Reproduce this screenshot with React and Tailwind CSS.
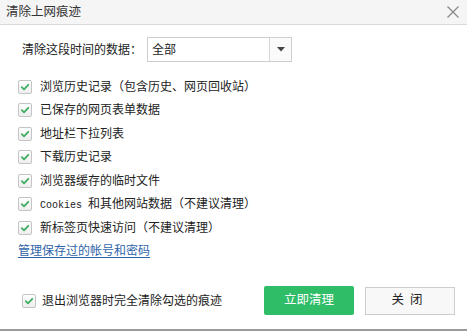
import React from "react";

const font = { fontFamily: '"Liberation Sans", "Noto Sans CJK SC", sans-serif' };

function Check() {
  return (
    <span className="flex h-[14px] w-[14px] shrink-0 items-center justify-center rounded-[2px] border border-[#c4c4c4] bg-gradient-to-b from-[#ffffff] to-[#eeeeee]">
      <svg width="10" height="10" viewBox="0 0 10 10">
        <path d="M1.8 5.2 L4 7.3 L8.3 2.8" fill="none" stroke="#3fae62" strokeWidth="1.8" strokeLinecap="round" strokeLinejoin="round" />
      </svg>
    </span>
  );
}

function Row({ children }) {
  return (
    <div className="flex h-[23.5px] items-center gap-[8px]">
      <Check />
      <span className="text-[12px] leading-none text-[#222]">{children}</span>
    </div>
  );
}

export default function App() {
  return (
    <div className="relative h-[331px] w-[467px] overflow-hidden bg-white" style={font}>
      <div className="flex h-[25px] items-center justify-between border-b border-[#d9d9d9] bg-[#f5f5f5] pl-[6px] pr-[6px]">
        <span className="text-[12.5px] text-[#333]">清除上网痕迹</span>
        <svg width="14" height="14" viewBox="0 0 14 14" className="mr-[1px]">
          <path d="M1.5 1.5 L12.5 12.5 M12.5 1.5 L1.5 12.5" stroke="#8a8a8a" strokeWidth="1.3" />
        </svg>
      </div>

      <div className="mt-[12px] flex items-center pl-[22px]">
        <span className="w-[125px] text-[12px] text-[#222]">清除这段时间的数据：</span>
        <div className="flex h-[25px] w-[145px] items-stretch border border-[#cfcfcf] bg-white">
          <span className="flex flex-1 items-center pl-[4px] text-[12px] text-[#222]">全部</span>
          <span className="flex w-[22px] items-center justify-center border-l border-[#d6d6d6] bg-[#fafafa]">
            <svg width="8" height="5" viewBox="0 0 8 5">
              <path d="M0 0 L8 0 L4 4.5 Z" fill="#444" />
            </svg>
          </span>
        </div>
      </div>

      <div className="mt-[13px] flex flex-col pl-[18px]">
        <Row>浏览历史记录（包含历史、网页回收站）</Row>
        <Row>已保存的网页表单数据</Row>
        <Row>地址栏下拉列表</Row>
        <Row>下载历史记录</Row>
        <Row>浏览器缓存的临时文件</Row>
        <Row>
          <span style={{ fontFamily: '"Liberation Mono", monospace' }} className="text-[10px]">Cookies </span>
          和其他网站数据（不建议清理）
        </Row>
        <Row>新标签页快速访问（不建议清理）</Row>
        <div className="flex h-[23.5px] items-center">
          <span className="text-[12px] leading-none text-[#2f64a8] underline underline-offset-2">管理保存过的帐号和密码</span>
        </div>
      </div>

      <div className="mt-[23px] flex items-center pl-[22px]">
        <div className="flex w-[242px] items-center gap-[6px]">
          <Check />
          <span className="text-[12px] text-[#222]">退出浏览器时完全清除勾选的痕迹</span>
        </div>
        <div className="flex h-[29px] w-[90px] items-center justify-center rounded-[2px] bg-[#2fbd68] text-[12.5px] text-white">
          立即清理
        </div>
        <div className="ml-[11px] flex h-[28px] w-[90px] items-center justify-center border border-[#cdcdcd] bg-[#f8f8f8] text-[12.5px] tracking-[6px] text-[#222]">
          关闭
        </div>
      </div>

      <div className="absolute bottom-0 left-0 h-[2px] w-full bg-[#9a9a9a]" />
    </div>
  );
}
